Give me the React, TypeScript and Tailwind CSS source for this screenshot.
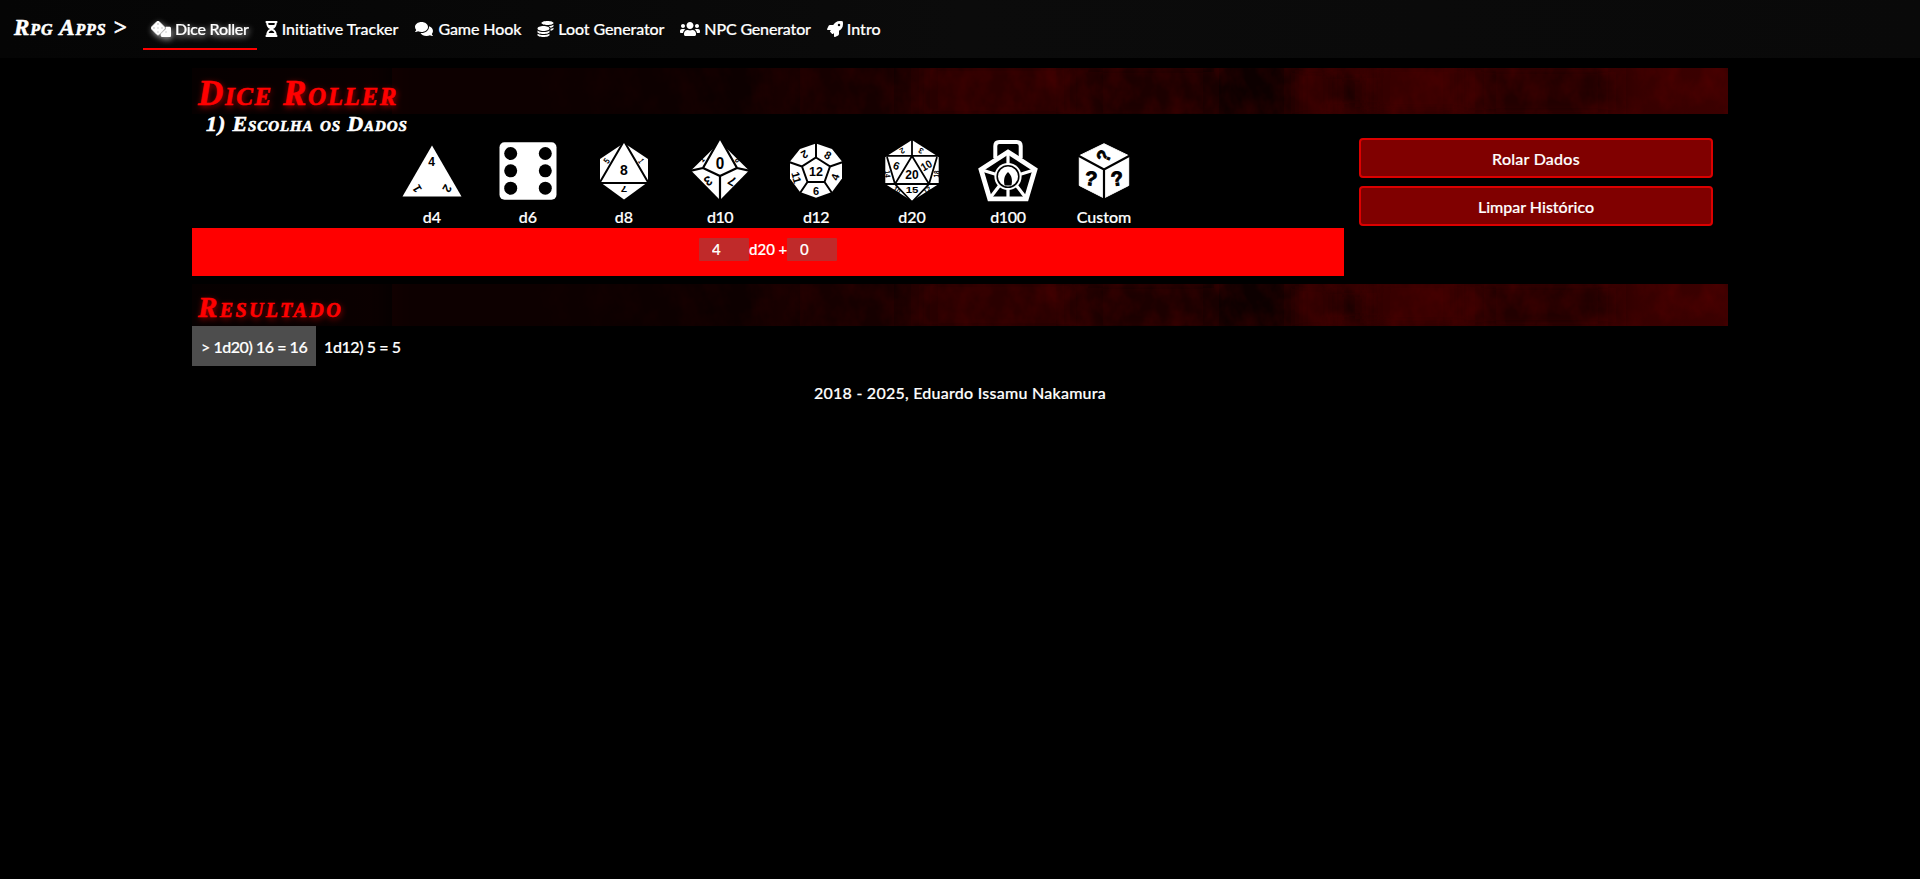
import type { ReactNode } from "react";
import { FaDice, FaHourglassHalf, FaComments, FaCoins, FaUsers, FaRocket } from "react-icons/fa";

const display =
  "font-['Liberation_Serif',serif] font-bold italic [font-variant:small-caps] whitespace-nowrap [-webkit-text-stroke:0.6px_currentColor]";

function Num({ x, y, size, r = 0, sx = 1, bold = false, children }: { x: number; y: number; size: number; r?: number; sx?: number; bold?: boolean; children: string }) {
  return (
    <text
      transform={`translate(${x} ${y}) rotate(${r}) scale(${sx} 1)`}
      fontSize={size}
      textAnchor="middle"
      dominantBaseline="central"
      fill="black"
      stroke={bold ? "black" : "none"}
      strokeWidth="0.9"
      className="font-['Liberation_Sans',sans-serif] font-bold"
    >
      {children}
    </text>
  );
}

const dice: { label: string; track?: string; art: ReactNode }[] = [
  {
    label: "d4",
    art: (
      <>
        <path d="M0-24.5 29.5 26.5H-29.5Z" />
        <Num x={-0.5} y={-8} size={12}>4</Num>
        <Num x={-15} y={18.5} size={12} r={-120}>1</Num>
        <Num x={15} y={18.5} size={12} r={120}>2</Num>
      </>
    ),
  },
  {
    label: "d6",
    art: (
      <>
        <rect x="-28.5" y="-27.7" width="57" height="57.5" rx="5" />
        {[-16.5, 0.8, 18.2].map((y) => (
          <g key={y} fill="black">
            <circle cx="-17.3" cy={y} r="6.5" />
            <circle cx="17.3" cy={y} r="6.5" />
          </g>
        ))}
      </>
    ),
  },
  {
    label: "d8",
    art: (
      <>
        <path d="M0-27 24-11V12L0 29.5-24 12V-11Z" />
        <path d="M0-29 24.5 13H-24.5Z" stroke="black" strokeWidth="2" />
        <Num x={0} y={-0.5} size={14}>8</Num>
        <Num x={0} y={19.5} size={9} r={180} sx={1.3}>7</Num>
        <Num x={-17} y={-9} size={9} r={-55} sx={0.8}>5</Num>
        <Num x={17} y={-9} size={9} r={55} sx={0.6}>1</Num>
      </>
    ),
  },
  {
    label: "d10",
    track: "tracking-[-0.5px]",
    art: (
      <>
        <path d="M0-28 29 .5 0 30-29 .5Z" />
        <path d="M0-32-17-2 0 6 17-2ZM-30 .8-17-2M30 .8 17-2M0 6V31" stroke="black" strokeWidth="2.2" />
        <Num x={0} y={-7} size={17} sx={0.9}>0</Num>
        <Num x={-12} y={11} size={13} r={150}>3</Num>
        <Num x={12} y={11} size={13} r={-150}>7</Num>
        <Num x={-18} y={-10.5} size={9} r={-45} sx={0.8}>1</Num>
        <Num x={18} y={-10.5} size={10} r={45} sx={0.7}>8</Num>
      </>
    ),
  },
  {
    label: "d12",
    track: "tracking-[-0.5px]",
    art: (
      <>
        <path d="M0-26.5 16-21 26-8.5V8.5L16 22 0 27.7-16 22-26 8.5V-8.5L-16-21Z" />
        <path d="M0-12.5 14-3.5 8.5 12H-8.5L-14-3.5ZM0-12.5V-28M14-3.5 27-8M8.5 12 16 23M-8.5 12-16 23M-14-3.5-27-8" stroke="black" strokeWidth="2" />
        <Num x={0} y={1.5} size={12.5}>12</Num>
        <Num x={-11.5} y={-15.5} size={11} r={150}>2</Num>
        <Num x={12} y={-15} size={11} r={30}>8</Num>
        <Num x={19} y={7} size={11} r={-70}>4</Num>
        <Num x={0} y={20.5} size={11}>6</Num>
        <Num x={-19.5} y={7.5} size={11} r={75}>11</Num>
      </>
    ),
  },
  {
    label: "d20",
    art: (
      <>
        <path d="M0-30 26.7-13V14L0 31-26.7 14V-13Z" />
        <path d="M-27-14.2H27M0-31V-14M0-14-17 14H17ZM-25-13-17 14 0 32 17 14 25-13M-27 14H27" fill="none" stroke="black" strokeWidth="1.8" />
        <Num x={0} y={5} size={12}>20</Num>
        <Num x={-15.5} y={-4.5} size={11} r={20}>6</Num>
        <Num x={14.5} y={-4.5} size={11} r={-30} sx={0.9}>10</Num>
        <Num x={0} y={20.5} size={8.5} sx={1.35}>15</Num>
        <Num x={-10} y={-19.5} size={8} r={150}>2</Num>
        <Num x={9} y={-19.5} size={8} r={-150}>3</Num>
        <Num x={-24.5} y={4} size={8} r={85} sx={0.8}>14</Num>
        <Num x={24.5} y={4} size={8} r={-85} sx={0.8}>18</Num>
        <Num x={-15} y={20} size={7} r={35}>10</Num>
        <Num x={15} y={20} size={7} r={-35}>12</Num>
      </>
    ),
  },
  {
    label: "d100",
    track: "tracking-[-0.3px]",
    art: (
      <g fill="none" stroke="white">
        <path d="M-12.7-12V-24Q-12.7-28-8.7-28H8.7Q12.7-28 12.7-24V-12" strokeWidth="4" />
        <path d="M0-18 27-.5 18.3 28.8H-18.3L-27-.5Z" strokeWidth="4.8" fill="black" />
        <path d="M0-18V-4M26 0 10 5M18 28 8 15M-18 28-8 15M-26 0-10 5M0 17V28" strokeWidth="3.2" />
        <circle cy="6.5" r="13.6" stroke="none" fill="white" />
        <circle cy="6.5" r="10.8" stroke="black" strokeWidth="1.6" />
        <path d="M0 2C4 5.5 4.6 11 3.4 15.4H-3.4C-4.6 11-4 5.5 0 2Z" fill="black" stroke="none" />
      </g>
    ),
  },
  {
    label: "Custom",
    art: (
      <>
        <path d="M0-26.3 24.7-14.3V15.5L0 28-24.7 15.5V-14.3Z" strokeLinejoin="round" stroke="white" strokeWidth="1" />
        <path d="M-26-14.5 0-.5 26-14.5M0-.5V30" stroke="black" strokeWidth="2.2" fill="none" />
        <Num x={0} y={-13.8} size={19} r={-65} sx={0.9} bold>?</Num>
        <Num x={-13} y={8.5} size={20} r={8} bold>?</Num>
        <Num x={13} y={8.5} size={20} r={-8} bold>?</Num>
      </>
    ),
  },
];

const links = [
  { icon: FaDice, size: "w-5", label: "Dice Roller", track: "tracking-[-0.27px]", active: true },
  { icon: FaHourglassHalf, size: "w-[13px]", label: "Initiative Tracker", track: "tracking-[0.05px]" },
  { icon: FaComments, size: "w-5", label: "Game Hook", track: "tracking-[-0.1px]" },
  { icon: FaCoins, size: "w-[17px]", label: "Loot Generator", track: "tracking-[-0.1px]" },
  { icon: FaUsers, size: "w-5", label: "NPC Generator", track: "tracking-[-0.15px]" },
  { icon: FaRocket, size: "w-4", label: "Intro", track: "tracking-normal" },
];

function Banner({ id, height, children }: { id: string; height: string; children: ReactNode }) {
  return (
    <div className={`relative ${height} w-full bg-linear-to-r from-[#060000] via-[#200000] via-55% to-[#3b0000]`}>
      <svg className="absolute inset-0 h-full w-full" preserveAspectRatio="none" viewBox="0 0 1536 46">
        <defs>
          <filter id={`${id}-soft`} x="-5%" y="-50%" width="110%" height="200%">
            <feGaussianBlur stdDeviation="12 6" />
          </filter>
          <filter id={`${id}-grain`} x="0" y="0" width="100%" height="100%">
            <feTurbulence type="fractalNoise" baseFrequency="0.045 0.03" numOctaves="4" seed="7" />
            <feColorMatrix values="0 0 0 0 0.2  0 0 0 0 0  0 0 0 0 0  1.4 0 0 0 -0.5" />
          </filter>
          <linearGradient id={`${id}-fade`}>
            <stop offset="0.2" stopColor="black" />
            <stop offset="0.55" stopColor="white" />
          </linearGradient>
          <mask id={`${id}-mask`}>
            <rect width="1536" height="46" fill={`url(#${id}-fade)`} />
          </mask>
        </defs>
        <g filter={`url(#${id}-soft)`}>
          <rect x="200" y="-10" width="380" height="66" fill="#090000" />
          <rect x="600" y="-10" width="110" height="66" fill="#170000" />
          <rect x="730" y="-5" width="150" height="56" fill="#290000" />
          <rect x="900" y="0" width="120" height="50" fill="#1d0000" />
          <rect x="1022" y="-10" width="78" height="66" fill="#0d0000" />
          <rect x="1108" y="0" width="30" height="50" fill="#340000" />
          <rect x="1145" y="10" width="34" height="26" fill="#160000" />
          <rect x="1180" y="-5" width="90" height="50" fill="#380000" />
          <rect x="1290" y="0" width="130" height="46" fill="#220000" />
        </g>
        <rect width="1536" height="46" filter={`url(#${id}-grain)`} mask={`url(#${id}-mask)`} opacity="0.35" />
      </svg>
      {children}
    </div>
  );
}

const button = "h-10 w-full rounded-[4px] border-2 border-[#dc0000] bg-[#800000] pt-[2px] text-center";
const field = "h-[23px] w-[50px] rounded-[1px] bg-[#c02a2a] pl-[13px] outline-none";

export default function App() {
  return (
    <div className="min-h-[879px] bg-black font-['Lato',sans-serif] text-base font-medium text-white [-webkit-text-stroke:0.2px_currentColor]">
      <nav className="flex h-[58px] items-start bg-linear-to-r from-[#050505] via-[#0b0b0b] to-[#090909] pl-[14px]">
        <a className={`${display} mt-[12px] w-[129px] text-[23px] leading-8 tracking-[0.9px]`}>Rpg Apps &gt;</a>
        {links.map(({ icon: Icon, size, label, track, active }) => (
          <a
            key={label}
            className={`flex h-[50px] items-center border-b-2 px-2 pt-[10px] whitespace-nowrap ${active ? "border-[#ff0000]" : "border-transparent"}`}
          >
            <span className={`flex items-center gap-1 ${active ? "[filter:drop-shadow(1px_2px_3px_#ffffffb0)]" : ""}`}>
              <Icon className={`${size} h-4 shrink-0 ${active ? "stroke-white stroke-[18px]" : ""}`} />
              <span className={track}>{label}</span>
            </span>
          </a>
        ))}
      </nav>

      <main className="mx-auto w-[1536px] pt-[10px]">
        <Banner id="title" height="h-[46px]">
          <h1 className={`${display} relative pt-[6px] pl-[6px] text-[35px] leading-10 tracking-[1.6px] text-[#ff0000] [text-shadow:1px_2px_6px_#ff0000b0]`}>
            Dice Roller
          </h1>
        </Banner>

        <div className="flex">
          <section className="w-[1152px]">
            <h2 className={`${display} h-[24px] pl-[14px] text-[22px] leading-[20px] tracking-[0.9px]`}>1) Escolha os Dados</h2>
            <div className="flex h-[90px] justify-center">
              {dice.map(({ label, track, art }) => (
                <div key={label} className="flex w-24 flex-col items-center">
                  <svg className="shrink-0" width="64" height="64" viewBox="-32 -32 64 64" fill="white">
                    {art}
                  </svg>
                  <span className={`mt-[3px] h-[23px] leading-6 ${track ?? ""}`}>{label}</span>
                </div>
              ))}
            </div>
            <div className="flex h-12 justify-center bg-[#ff0000] pt-[10px] text-[15px] leading-[23px]">
              <input className={field} defaultValue="4" />
              <span className="w-[38px] whitespace-nowrap">d20 +</span>
              <input className={field} defaultValue="0" />
            </div>
          </section>
          <aside className="flex w-96 flex-col gap-2 pt-6 pr-[15px] pl-[15px]">
            <button className={`${button} tracking-[0.25px]`}>Rolar Dados</button>
            <button className={button}>Limpar Histórico</button>
          </aside>
        </div>

        <div className="pt-2">
          <Banner id="result" height="h-[42px]">
            <h2 className={`${display} relative pt-[7px] pl-[6px] text-[29px] leading-8 tracking-[2.4px] text-[#ff0000] [text-shadow:1px_2px_6px_#ff0000b0]`}>
              Resultado
            </h2>
          </Banner>
        </div>
        <div className="flex h-10 leading-[42px] whitespace-nowrap">
          <span className="w-[124px] bg-[#4d4d4d] pl-[9px] tracking-[-0.45px]">&gt; 1d20) 16 = 16</span>
          <span className="pl-2 tracking-[-0.4px]">1d12) 5 = 5</span>
        </div>
      </main>
      <footer className="pt-[15px] text-center leading-6 tracking-[0.25px]">2018 - 2025, Eduardo Issamu Nakamura</footer>
    </div>
  );
}
